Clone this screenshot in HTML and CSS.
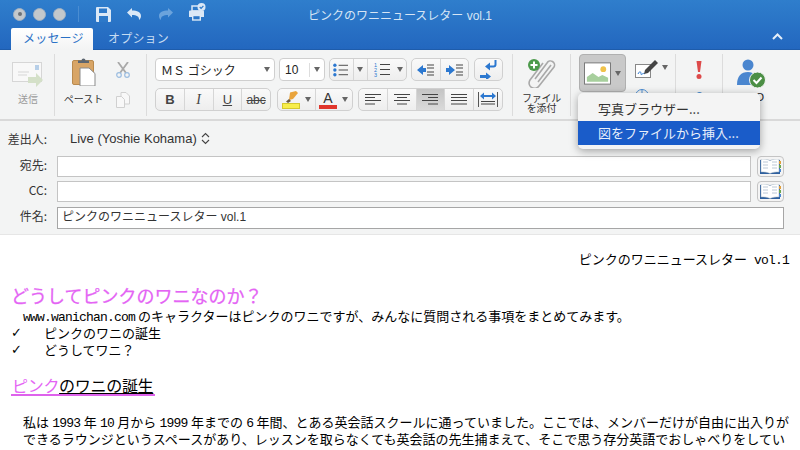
FILE: index.html
```html
<!DOCTYPE html>
<html lang="ja">
<head>
<meta charset="utf-8">
<title>ピンクのワニニュースレター vol.1</title>
<link rel="stylesheet" href="styles.css">
</head>
<body>
<div class="window">
  <header class="chrome">
    <div class="titlebar">
      <div class="qat">
        <span class="light light-dot"></span><span class="light"></span><span class="light"></span>
        <span class="qat-sep"></span>
        <svg class="qat-save" width="15" height="15" viewBox="0 0 15 15"><path d="M1 0h11l3 3v11a1 1 0 0 1-1 1H1a1 1 0 0 1-1-1V1a1 1 0 0 1 1-1z" fill="#dbe8f6"/><rect x="3" y="1.500" width="8" height="4.500" fill="#2d79c9"/><rect x="3" y="9" width="9" height="6" fill="#2d79c9"/></svg>
        <svg class="qat-undo" width="16" height="12" viewBox="0 0 16 12"><path d="M1 4.500 6 0v2.600c5 0 9 1.600 9 5.400 0 1.600-.8 3-2 4 .4-3.600-2.400-5-7-5v2.600z" fill="#dbe8f6"/></svg>
        <svg class="qat-redo" width="16" height="12" viewBox="0 0 16 12"><path d="M15 4.500 10 0v2.600c-5 0-9 1.600-9 5.400 0 1.600.8 3 2 4-.4-3.600 2.400-5 7-5v2.600z" fill="#6ba3dc"/></svg>
        <svg class="qat-print" width="18" height="18" viewBox="0 0 18 18"><rect x="4" y="3" width="9" height="5" fill="none" stroke="#dbe8f6" stroke-width="1.500"/><path d="M1 8.500a1 1 0 0 1 1-1h13a1 1 0 0 1 1 1V14h-3v-2H4v2H1z" fill="#dbe8f6"/><rect x="4.700" y="12.500" width="7.600" height="4.500" fill="none" stroke="#dbe8f6" stroke-width="1.400"/><circle cx="13.500" cy="4" r="4" fill="#dbe8f6"/><path d="m11.700 4 1.400 1.400 2.300-2.600" fill="none" stroke="#2d79c9" stroke-width="1.200"/></svg>
      </div>
      <div class="doc-title">ピンクのワニニュースレター vol.1</div>
      <div></div>
    </div>
    <div class="tabs">
      <div class="tab tab-active">メッセージ</div>
      <div class="tab">オプション</div>
      <svg class="collapse" width="11" height="7" viewBox="0 0 11 7"><path d="m1 6 4.500-4.500L10 6" fill="none" stroke="#e4eef9" stroke-width="2"/></svg>
    </div>
  </header>

  <section class="ribbon">
    <div class="group group-send">
      <svg width="32" height="28" viewBox="0 0 32 28"><rect x=".5" y=".5" width="29" height="19" fill="#f8f8f8" stroke="#d6d6d6"/><rect x="23" y="3" width="4" height="5" fill="#b7cfe8"/><path d="M6 10h11M6 13h9" stroke="#d6d6d6"/><path d="M16 15h8v-4l7 7-7 7v-4h-8z" fill="#d4e0c8"/></svg>
      <span class="rb-label rb-dim">送信</span>
    </div>
    <div class="group group-paste">
      <div class="paste">
        <svg width="24" height="29" viewBox="0 0 24 29"><rect x=".5" y="3.500" width="21" height="24" rx="1.500" fill="#d8a566" stroke="#b98a4e"/><path d="M6 5V3.500h3.500a2 2 0 0 1 4 0H17V6H6z" fill="#5d6670"/><path d="M8 11h9l6 5.500V29H8z" fill="#fff" stroke="#8b8b8b"/></svg>
        <span class="rb-label paste-label">ペースト</span>
      </div>
      <div class="clip-tools">
        <svg width="14" height="16" viewBox="0 0 14 16"><path d="M2 0l8 11M12 0 4 11" stroke="#a9a9a9" stroke-width="1.800"/><circle cx="3" cy="13" r="2.300" fill="none" stroke="#9cbde0" stroke-width="1.200"/><circle cx="11" cy="13" r="2.300" fill="none" stroke="#9cbde0" stroke-width="1.200"/></svg>
        <svg width="14" height="16" viewBox="0 0 14 16"><path d="M5 .5h5l3.500 3.500v8H5z" fill="#f8f8f8" stroke="#d0d0d0"/><path d="M.5 4.500h5l3 3v8h-8z" fill="#f8f8f8" stroke="#d0d0d0"/></svg>
      </div>
    </div>
    <div class="group group-text">
      <div class="tool-row">
        <div class="box box-font"><span class="box-value">ＭＳ ゴシック</span><i class="caret"></i></div>
        <div class="box box-size"><span class="box-value box-num">10</span><span class="box-div"></span><i class="caret"></i></div>
        <div class="seg seg-list">
          <div class="cell cell-bul">
            <svg width="16" height="14" viewBox="0 0 16 14"><g fill="#2c78d0"><circle cx="2" cy="2" r="1.800"/><circle cx="2" cy="7" r="1.800"/><circle cx="2" cy="12" r="1.800"/></g><path d="M6 2h10M6 7h10M6 12h10" stroke="#444"/></svg>
            <span class="cell-div"></span>
            <i class="caret"></i>
          </div>
          <div class="cell cell-num">
            <svg width="16" height="15" viewBox="0 0 16 15"><g class="num-digits"><text x="0" y="5">1</text><text x="0" y="10">2</text><text x="0" y="15">3</text></g><path d="M6 2.500h10M6 7.500h10M6 12.500h10" stroke="#444"/></svg>
            <i class="caret"></i>
          </div>
        </div>
        <div class="seg seg-indent">
          <div class="cell"><svg width="17" height="12" viewBox="0 0 17 12"><path d="M0 6 6 1v3h3v4H6v3z" fill="#2c78d0"/><path d="M10 1h7M10 4h7M10 8h7M10 11h7" stroke="#444"/></svg></div>
          <div class="cell"><svg width="17" height="12" viewBox="0 0 17 12"><path d="M9 6 3 1v3H0v4h3v3z" fill="#2c78d0"/><path d="M10 1h7M10 4h7M10 8h7M10 11h7" stroke="#444"/></svg></div>
        </div>
        <div class="seg seg-wrap">
          <div class="cell"><svg width="17" height="19" viewBox="0 0 17 19"><path d="M15.500 0v4.500a2 2 0 0 1-2 2H8" fill="none" stroke="#2c78d0" stroke-width="2"/><path d="M10 2.500 5 6.500l5 4zM11 16.500 6 12.500V15H0v3h6v2.500z" fill="#2c78d0"/></svg></div>
        </div>
      </div>
      <div class="tool-row">
        <div class="seg seg-format">
          <div class="cell fmt fmt-b">B</div>
          <div class="cell fmt fmt-i">I</div>
          <div class="cell fmt fmt-u">U</div>
          <div class="cell fmt fmt-s">abc</div>
        </div>
        <div class="seg seg-color">
          <div class="cell cell-c">
            <svg width="18" height="18" viewBox="0 0 18 18"><path d="M8 1.500 14 0l2 2-5 6-4 1z" fill="#e9a43c"/><path d="M7 8 4 10.500 6 12l3-2z" fill="#6a5a44"/><rect x=".5" y="12.500" width="17" height="5" fill="#f8ee4a" stroke="#d5c92d"/></svg>
            <i class="caret"></i>
          </div>
          <div class="cell cell-c">
            <span class="font-a">A</span>
            <i class="caret"></i>
          </div>
        </div>
        <div class="seg seg-align">
          <div class="cell"><svg class="al" width="16" height="11" viewBox="0 0 16 11"><path d="M0 .5h16M0 3.500h10M0 6.500h16M0 10h10" stroke="#444"/></svg></div>
          <div class="cell"><svg class="al" width="16" height="11" viewBox="0 0 16 11"><path d="M0 .5h16M3 3.500h10M0 6.500h16M3 10h10" stroke="#444"/></svg></div>
          <div class="cell cell-on"><svg class="al" width="16" height="11" viewBox="0 0 16 11"><path d="M0 .5h16M6 3.500h10M0 6.500h16M6 10h10" stroke="#444"/></svg></div>
          <div class="cell"><svg class="al" width="16" height="11" viewBox="0 0 16 11"><path d="M0 .5h16M0 3.500h16M0 6.500h16M0 10h16" stroke="#444"/></svg></div>
          <div class="cell"><svg width="20" height="15" viewBox="0 0 20 15"><path d="M.5 0v15M19.500 0v15" stroke="#555"/><path d="M2 4l4-3.500V3h8V.5L18 4l-4 3.500V5H6v2.500z" fill="#2c78d0"/><path d="M3 9.500h14M3 12h14" stroke="#444"/></svg></div>
        </div>
      </div>
    </div>
    <div class="group group-attach">
      <svg width="30" height="30" viewBox="0 0 30 30"><g fill="none" stroke="#a9a9a9" stroke-width="1.600"><path d="M8 21 20 5a3.500 3.500 0 0 1 7 4L12 28a5 5 0 0 1-9-6L16 5"/><path d="M11 24 24 7"/></g><circle cx="7" cy="7" r="6" fill="#4c9a4b"/><path d="M7 3.500v7M3.500 7h7" stroke="#fff" stroke-width="2"/></svg>
      <span class="rb-label attach-label">ファイル<br>を添付</span>
    </div>
    <div class="group group-insert">
      <div class="pic-btn">
        <svg width="28" height="23" viewBox="0 0 28 23"><rect x=".5" y=".5" width="27" height="22" fill="#fff" stroke="#777"/><circle cx="20" cy="7" r="3" fill="#f0c24a"/><path d="M3 20v-5l6-4 6 4 4-2 6 3v4z" fill="#a7cf9d"/></svg>
        <i class="caret"></i>
      </div>
      <div class="insert-side">
        <div class="sign">
          <svg width="24" height="18" viewBox="0 0 24 18"><rect x=".5" y="4.500" width="15" height="13" fill="#fff" stroke="#888"/><path d="M3 14c2-4 3-2 3 0s2-2 4 0" fill="none" stroke="#2c78d0"/><path d="M10 10 20 0l3 3-10 10-4 1z" fill="#444"/></svg>
          <i class="caret"></i>
        </div>
        <svg class="globe" width="14" height="14" viewBox="0 0 14 14"><circle cx="7" cy="7" r="6.500" fill="none" stroke="#4f8fd3"/><path d="M7 0v14" stroke="#4f8fd3"/></svg>
      </div>
    </div>
    <div class="group group-flag">
      <svg width="6" height="18" viewBox="0 0 6 18"><path d="M.5 0h5L4 11H2z" fill="#dd4a4a"/><circle cx="3" cy="15.500" r="2.500" fill="#dd4a4a"/></svg>
      <span class="flag-low"></span>
    </div>
    <div class="group group-perm">
      <svg width="30" height="30" viewBox="0 0 30 30"><circle cx="12" cy="6" r="5.500" fill="#4a86cf"/><path d="M1 26c0-9 4-13 11-13 3 0 5 1 7 3v10z" fill="#4a86cf"/><circle cx="21.500" cy="21" r="8" fill="#4c8f45" stroke="#f3f4f4"/><path d="m17.500 21 3 3 5-5.500" fill="none" stroke="#fff" stroke-width="2"/></svg>
      <span class="perm-label">O</span>
    </div>

    <div class="menu">
      <div class="menu-item">写真ブラウザー...</div>
      <div class="menu-item menu-item-on">図をファイルから挿入...</div>
    </div>
  </section>

  <section class="fields">
    <div class="from-row"><span class="f-label">差出人:</span><span class="from-value">Live (Yoshie Kohama)</span><svg width="9" height="13" viewBox="0 0 9 13"><path d="m1 5 3.500-3.500L8 5M1 8l3.500 3.500L8 8" fill="none" stroke="#444" stroke-width="1.100"/></svg></div>
    <div class="f-row"><span class="f-label">宛先:</span><div class="input"></div><div class="book-btn"><svg width="23" height="16" viewBox="0 0 23 16"><path d="M1 1h20v14H1z" fill="#2d5f9e"/><path d="M2 0c3 0 6 0 9 1.500C14 0 17 0 20 0v13c-3 0-6 0-9 1.500C8 13 5 13 2 13z" fill="#fff" stroke="#9ab"  stroke-width=".5"/><path d="M4 3h5M4 6h5M4 9h5M13 3h5M13 6h5M13 9h5" stroke="#bcc8d6"/><path d="M20 2h2v3h-2z" fill="#e0a03c"/><path d="M20 6h2v3h-2z" fill="#6aa84f"/><path d="M20 10h2v3h-2z" fill="#4a86cf"/></svg></div></div>
    <div class="f-row"><span class="f-label">CC:</span><div class="input"></div><div class="book-btn"><svg width="23" height="16" viewBox="0 0 23 16"><path d="M1 1h20v14H1z" fill="#2d5f9e"/><path d="M2 0c3 0 6 0 9 1.500C14 0 17 0 20 0v13c-3 0-6 0-9 1.500C8 13 5 13 2 13z" fill="#fff" stroke="#9ab" stroke-width=".5"/><path d="M4 3h5M4 6h5M4 9h5M13 3h5M13 6h5M13 9h5" stroke="#bcc8d6"/><path d="M20 2h2v3h-2z" fill="#e0a03c"/><path d="M20 6h2v3h-2z" fill="#6aa84f"/><path d="M20 10h2v3h-2z" fill="#4a86cf"/></svg></div></div>
    <div class="f-row f-row-subject"><span class="f-label">件名:</span><div class="input input-subject">ピンクのワニニュースレター vol.1</div></div>
  </section>

  <main class="doc">
    <div class="doc-head">ピンクのワニニュースレター <span class="mono mono-gap">vol.1</span></div>
    <h1 class="h-pink">どうしてピンクのワニなのか？</h1>
    <p class="line indent"><span class="mono">www.wanichan.com</span> のキャラクターはピンクのワニですが、みんなに質問される事項をまとめてみます。</p>
    <p class="line check"><span class="tick">✓</span>ピンクのワニの誕生</p>
    <p class="line check"><span class="tick">✓</span>どうしてワニ？</p>
    <h2 class="h-under"><span class="pink">ピンク</span><span class="under">のワニの誕生</span></h2>
    <p class="line indent para-first">私は <span class="mono">1993</span> 年 <span class="mono">10</span> 月から <span class="mono">1999</span> 年までの <span class="mono">6</span> 年間、とある英会話スクールに通っていました。ここでは、メンバーだけが自由に出入りが</p>
    <p class="line indent">できるラウンジというスペースがあり、レッスンを取らなくても英会話の先生捕まえて、そこで思う存分英語でおしゃべりをしてい</p>
    <p class="line indent">ました。当時 <span class="mono">1995</span> 年から <span class="mono">1997</span> 年頃にかけて、そのラウンジによく通っていました。</p>
  </main>
</div>
</body>
</html>
```

FILE: styles.css
```css
* { box-sizing: border-box; }
html, body { margin: 0; padding: 0; }
body {
  width: 800px;
  height: 450px;
  overflow: hidden;
  background: #fff;
  font-family: "Liberation Sans", "Noto Sans CJK JP", sans-serif;
  color: #222;
}
.window { display: flex; flex-direction: column; width: 800px; height: 450px; overflow: hidden; }

/* blue chrome */
.chrome {
  height: 50px;
  background: linear-gradient(#2f7ecc, #2367bf);
  border-bottom: 1px solid #1e5cab;
}
.titlebar { height: 28px; display: grid; grid-template-columns: 1fr auto 1fr; align-items: center; }
.qat { display: flex; align-items: center; padding-left: 13px; }
.light {
  width: 13px; height: 13px; border-radius: 50%;
  background: #c3c8cc; border: 1px solid #9fb0c2; margin-right: 7px;
  display: flex; align-items: center; justify-content: center;
}
.light-dot::after { content: ""; width: 4px; height: 4px; border-radius: 50%; background: #6d7278; }
.qat-sep { width: 1px; height: 16px; background: #4a8dd2; margin: 0 17px 0 5px; }
.qat-undo { margin-left: 15px; }
.qat-redo { margin-left: 16px; }
.qat-print { margin-left: 14px; margin-top: -4px; }
.doc-title { font-size: 12px; color: #d6e5f5; }
.tabs { position: relative; height: 21px; display: flex; padding-left: 11px; }
.tab { width: 82px; padding-left: 12px; font-size: 12px; line-height: 22px; letter-spacing: .2px; color: #c6dcf2; }
.tab + .tab { padding-left: 15px; }
.tab-active { height: 22px; background: linear-gradient(#fff, #f3f4f4); color: #2a71c6; border-radius: 2px 2px 0 0; }
.collapse { margin-left: auto; margin-right: 17px; margin-top: 5px; }

/* ribbon */
.ribbon {
  position: relative;
  height: 71px;
  display: flex;
  padding: 4px 0;
  background: #f3f4f4;
  border-bottom: 2px solid #d9d9d9;
}
.group { height: 62px; border-right: 1px solid #dcdcdc; flex: none; display: flex; }
.group-send { width: 55px; flex-direction: column; align-items: center; padding: 8px 0 0 2px; }
.group-paste { width: 92px; padding: 3px 0 0 1px; }
.paste { width: 55px; display: flex; flex-direction: column; align-items: center; }
.clip-tools { display: flex; flex-direction: column; gap: 14px; padding: 5px 0 0 5px; }
.rb-label { font-size: 10px; line-height: 10px; text-align: center; color: #333; font-family: "Noto Sans CJK JP", sans-serif; }
.rb-dim { color: #9a9a9a; margin-top: 4px; }
.paste-label { margin-top: 8px; width: 55px; }
.group-text { width: 366px; flex-direction: column; gap: 7px; padding: 4px 0 0 8px; }
.tool-row { display: flex; gap: 4px; height: 23px; }
.box {
  height: 23px; background: #fff; border: 1px solid #cfcfcf; border-radius: 4px;
  display: flex; align-items: center; padding-left: 5px;
}
.box-font { width: 120px; }
.box-size { width: 46px; }
.box-value { font-size: 12px; font-family: "Noto Sans CJK JP", sans-serif; flex: 1; color: #222; }
.box-num { font-family: "Liberation Sans", sans-serif; }
.box-div { width: 1px; height: 14px; background: #ddd; margin-right: 4px; }
.caret {
  display: inline-block; flex: none; width: 0; height: 0;
  border-left: 3.500px solid transparent; border-right: 3.500px solid transparent;
  border-top: 5px solid #666; margin-right: 4px;
}
.seg {
  height: 23px; display: flex; border: 1px solid #d0d0d0; border-radius: 5px;
  background: linear-gradient(#f9f9f9, #eee); overflow: hidden;
}
.cell { flex: 1; display: flex; align-items: center; justify-content: center; border-left: 1px solid #d6d6d6; }
.cell:first-child { border-left: 0; }
.cell-on { background: linear-gradient(#c4c4c4, #dadada); }
.cell-c { gap: 5px; justify-content: flex-end; }
.cell-bul { flex: none; width: 37px; padding-left: 3px; justify-content: flex-start; }
.cell-bul .cell-div { width: 1px; height: 23px; background: #d6d6d6; margin: 0 3px 0 5px; }
.cell-num { padding-left: 6px; justify-content: flex-start; gap: 7px; }
.num-digits { font-family: "Liberation Sans", sans-serif; font-size: 5.500px; fill: #2c78d0; }
.seg-list { width: 78px; }
.seg-indent { width: 58px; }
.seg-wrap { width: 29px; margin-left: 1px; }
.seg-format { width: 116px; margin-right: 2px; }
.seg-color { width: 76px; margin-right: 1px; }
.seg-align { width: 145px; }
.fmt { font-size: 13px; color: #444; }
.fmt-b { font-weight: 700; }
.fmt-i { font-style: italic; font-family: "Liberation Serif", serif; font-size: 14px; }
.fmt-u { text-decoration: underline; }
.fmt-s { text-decoration: line-through; font-size: 12px; }
.font-a { font-size: 14px; line-height: 14px; width: 18px; text-align: center; color: #333; border-bottom: 4px solid #e0352b; }
.group-attach { width: 58px; flex-direction: column; align-items: center; padding: 4px 0 0 0; }
.attach-label { margin-top: 5px; letter-spacing: -.2px; color: #333; }
.group-insert { width: 105px; padding-left: 8px; }
.pic-btn {
  width: 47px; height: 38px; background: #c9c9c9; border: 1px solid #b0b0b0; border-radius: 4px;
  display: flex; align-items: center; padding-left: 4px; gap: 4px;
}
.insert-side { padding: 6px 0 0 9px; display: flex; flex-direction: column; }
.sign { display: flex; align-items: center; gap: 3px; }
.sign .caret { margin-top: -3px; }
.globe { margin-top: 11px; }
.group-flag { width: 47px; flex-direction: column; align-items: center; padding-top: 7px; }
.flag-low { width: 5px; height: 8px; background: #4f8fd3; margin-top: 13px; border-radius: 2px 2px 0 0; }
.group-perm { width: 77px; border-right: 0; flex-direction: column; padding: 5px 0 0 13px; position: relative; }
.perm-label { font-size: 11px; align-self: flex-end; margin: 2px 36px 0 0; }

.menu {
  position: absolute; left: 578px; top: 43px; width: 182px; height: 56px;
  background: #f4f4f4; border-radius: 5px; box-shadow: 0 2px 8px rgba(0,0,0,.35);
  padding: 4px 0; font-family: "Noto Sans CJK JP", sans-serif; font-size: 13px; color: #333;
}
.menu-item { height: 24px; line-height: 23px; padding-left: 20px; }
.menu-item-on { background: #1a5cc9; color: #e8effa; }

/* address fields */
.fields { height: 114px; background: #f3f4f4; border-bottom: 1px solid #e6e6e6; padding: 9px 16px 0 0; font-size: 13px; color: #333; }
.f-label { width: 47px; text-align: right; margin-right: 10px; flex: none; font-family: "Noto Sans CJK JP", sans-serif; font-size: 12px; }
.from-row { height: 17px; display: flex; align-items: center; margin-bottom: 9px; }
.from-row .f-label { margin-right: 23px; }
.from-value { margin-right: 4px; font-size: 13px; }
.f-row { display: flex; height: 21px; margin-bottom: 4px; }
.f-row-subject { height: 22px; margin-top: 5px; }
.input { flex: 1; background: #fff; border: 1px solid #c4c4c4; }
.input-subject { border-color: #a6a6a6; padding-left: 4px; font-size: 12px; line-height: 19px; font-family: "Liberation Sans", "Noto Sans CJK JP", sans-serif; }
.book-btn { width: 27px; margin-left: 6px; flex: none; background: #f4f4f4; border: 1px solid #c4c4c4; border-radius: 4px; display: flex; align-items: center; justify-content: center; }

/* document */
.doc { flex: 1; padding: 15px 11px 0 11px; font-family: "Noto Sans CJK JP", sans-serif; font-size: 13px; color: #000; overflow: hidden; }
.doc p, .doc h1, .doc h2 { margin: 0; font-weight: 400; }
.mono { font-family: "Liberation Mono", monospace; font-size: 13px; letter-spacing: -.8px; }
.mono-gap { margin-left: 4px; }
.doc-head { text-align: right; height: 17px; line-height: 17px; }
.h-pink { margin-top: 16px !important; font-size: 18px; height: 24px; line-height: 24px; color: #e464f4; -webkit-text-stroke: .25px #e464f4; }
.line { height: 17px; line-height: 17px; white-space: nowrap; }
.indent { padding-left: 12px; }
.check { display: flex; }
.tick { width: 33px; font-family: "DejaVu Sans", sans-serif; }
.h-under { margin-top: 19px !important; font-size: 16px; letter-spacing: -.3px; height: 19px; line-height: 17px; width: 144px; padding-left: 1px; white-space: nowrap; border-bottom: 2px solid #de62ec; }
.pink { color: #e464f4; }
.under { text-decoration: underline; text-decoration-thickness: 1px; text-underline-offset: 1px; }
.para-first { margin-top: 17px !important; word-spacing: .4px; }
```
